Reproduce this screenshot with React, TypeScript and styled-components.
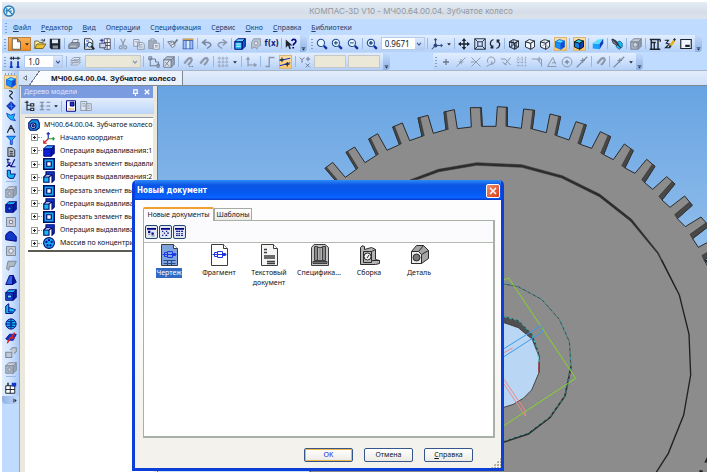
import React from "react";
import styled, { createGlobalStyle, css } from "styled-components";

const Global = createGlobalStyle`
  * { box-sizing: border-box; }
  html, body, #root { height: 100%; }
  body { margin: 0; background: #fff; }
  body, button, input, select {
    font-family: "Noto Sans", "DejaVu Sans Condensed", sans-serif;
    font-size: 7px;
    line-height: 10px;
  }
  button { border: 0; padding: 0; margin: 0; background: none; color: inherit; }
`;

const K = "#1c2430";
const N = "#000080";
const B = "#1038c8";
const C = "#18b8f0";
const G = "#8d98ab";

/* ---------- icons (16 x 16 grid) ---------- */

const cubeWire = (s: string, fill = "none", top = fill, side = fill) => (
  <g stroke={s} strokeWidth="1.2" strokeLinejoin="round">
    <path d="M2 5 9 7v8l-7-3z" fill={fill} />
    <path d="M2 5 7 2l7 2-5 3z" fill={top} />
    <path d="m9 7 5-3v8l-5 3z" fill={side} />
  </g>
);
const boxIcon = (s: string, f: string, t: string, sd: string, inner?: React.ReactNode) => (
  <g stroke={s} strokeWidth="1.3" strokeLinejoin="round">
    <path d="M1 5h10v10H1z" fill={f} />
    <path d="m1 5 4-4h10l-4 4z" fill={t} />
    <path d="m11 5 4-4v10l-4 4z" fill={sd} />
    {inner}
  </g>
);
const lens = (extra?: React.ReactNode) => (
  <g fill="none" stroke="#1c4a90" strokeWidth="1.4">
    <circle cx="6.5" cy="6.5" r="4.8" fill="#e8f6ff" />
    <path d="m10.5 10.5 4 4" stroke="#1230a0" strokeWidth="3" />
    {extra}
  </g>
);
const magnet = (
  <g fill="none" stroke={G} strokeWidth="3">
    <path d="m3 10 5-6q4-3 5 1 0 2-5 7" />
  </g>
);

const icons: Record<string, React.ReactNode> = {
  newdoc: <path d="M3 1h7l4 4v10H3zM10 1v4h4" fill="#fff" stroke="#554" strokeWidth="1.2" />,
  open: (
    <g stroke="#5a4a10" strokeWidth="1">
      <path d="M1 14V4h5l1 2h5v2" fill="#fff2a0" />
      <path d="m1 14 3-6h12l-4 6z" fill="#e8c030" />
      <path d="M9 3q3-2 5 1m0-3v3h-3" fill="none" stroke={K} />
    </g>
  ),
  save: (
    <g>
      <path d="M1 1h14v14H3l-2-2z" fill={K} />
      <path d="M4 2h8v5H4z" fill="#dfe9f5" />
      <path d="M5 10h7v4H5z" fill="#8a93a0" />
    </g>
  ),
  print: (
    <g stroke="#606a7a" strokeWidth="1">
      <path d="m5 7 2-5h7l-2 5z" fill="#e8eef5" />
      <path d="M1 9l3-3h11v5l-3 3H1z" fill="#8c96a6" />
      <path d="M3 11h8" stroke="#e4e8ee" />
    </g>
  ),
  preview: (
    <g fill="none" stroke={K} strokeWidth="1.2">
      <path d="M2 1h8l3 3v11H2z" fill="#fff" />
      <path d="M4 4h4M4 13V7" stroke={B} />
      <circle cx="9" cy="9" r="3.3" fill="#c8f0ff" />
      <path d="m11 11 4 4" strokeWidth="2.4" />
    </g>
  ),
  insert: (
    <g fill="#fff" stroke="#3a3f58" strokeWidth="1.1">
      <path d="M7 1h8v14H7zM7 6h8M11 1v14M7 10h8" />
      <path d="M1 7h8v6H1z" fill="#c8d4f0" />
      <path d="M1 3h5M4 1v5" stroke={N} />
    </g>
  ),
  cut: (
    <g fill="none" stroke={G} strokeWidth="1.5">
      <path d="m5 1 4 9M11 1 7 10" />
      <circle cx="5" cy="12.5" r="2" />
      <circle cx="11" cy="12.5" r="2" />
    </g>
  ),
  copy: <path d="M1 2h7v9H1zM6 6h7l2 2v7H6zM8 9h5M8 12h5M3 5h3" fill="#e4ecf6" stroke={G} strokeWidth="1.3" />,
  paste: (
    <g stroke={G} strokeWidth="1.3">
      <path d="M1 3h10v11H1z" fill="#a5aebd" />
      <path d="M4 1h4v3H4z" fill="#dde4ee" />
      <path d="M7 7h8v8H7zM9 10h4M9 12h4" fill="#eef3fa" />
    </g>
  ),
  brush: (
    <g stroke="#6b7688" strokeWidth="1.2">
      <path d="m1 5 6 8 4-3-3-6z" fill="#dfe7f2" />
      <path d="m9 8 5-6" strokeWidth="2.5" />
      <path d="m3 7 4-1m-2 4 4-2" />
    </g>
  ),
  table: (
    <g>
      <path d="M1 1h14v14H1z" fill="#2a55b8" />
      <path d="M1 1h14v2H1z" fill="#e0a040" />
      <path d="M2 4h3v10H2z" fill="#9cc0f5" />
      <path d="M6 4h4v10H6z" fill="#dceaff" />
      <path d="M11 4h3v10h-3z" fill="#9cc0f5" />
    </g>
  ),
  undo: <path d="M2 6h8q5 2 2 5l-4 3M7 2 2 6l5 4" fill="none" stroke="#7686a4" strokeWidth="2" />,
  redo: <path d="M14 6H6q-5 2-2 5l4 3M9 2l5 4-5 4" fill="none" stroke="#8c99b2" strokeWidth="2" />,
  vars: boxIcon(N, C, "#60e0ff", "#1060c8", <path d="M3 8h6M3 11h6" stroke="#e8ffff" />),
  grayGear: (
    <g stroke={G} strokeWidth="1.2" fill="#b9c1ce">
      <path d="M5 1h9v9l-3 1-2 4-2-3-5 2V6z" />
      <circle cx="8" cy="7" r="2.4" fill="#e4e9f0" />
    </g>
  ),
  help: (
    <g>
      <path d="M1 2v11l3-3 2 5 2-1-2-4h4z" fill={K} />
      <path d="M9 4q1-3 4-2 3 2 0 5-2 1-2 3m0 2v2" fill="none" stroke={N} strokeWidth="2.2" />
    </g>
  ),
  zoom: lens(),
  zoomIn: lens(<path d="M4 6.5h5M6.5 4v5" />),
  zoomOut: lens(<path d="M4 6.5h5" />),
  zoomAll: lens(<path d="M4 6.5h5M6.5 4v5" strokeWidth="2" />),
  axes: (
    <g fill="none" stroke="#3b4f78" strokeWidth="1.4">
      <path d="M6 1v9h9M6 10l-5 5M4 3l2-2 2 2M13 8l2 2-2 2" />
      <circle cx="6" cy="10" r="2" fill={B} />
    </g>
  ),
  move: <path d="M8 0 5 4h2v3H4V5L0 8l4 3V9h3v3H5l3 4 3-4H9V9h3v2l4-3-4-3v2H9V4h2z" fill={K} />,
  fit: <path d="M1 1h14v14H1zM5 5h6v6H5zM1 1l4 4M15 1l-4 4M1 15l4-4M15 15l-4-4" fill="none" stroke={K} strokeWidth="1.2" />,
  rotate: <path d="M6 2Q1 4 2 9l3 4M2 13h3v-3M10 14q5-2 4-7l-3-4m3 0h-3v3" fill="none" stroke={K} strokeWidth="1.7" />,
  cubeA: (
    <g>
      {cubeWire(K)}
      <path d="M2 12l5-3 7 3M7 9V2M5 4v9M11 5v9" stroke={K} strokeWidth=".9" fill="none" />
    </g>
  ),
  cubeB: cubeWire(K, "#f4f8ff"),
  cubeC: (
    <g>
      {cubeWire(K, "#f4f8ff")}
      <path d="m2 12 5-3 7 3M7 9V2" stroke={G} fill="none" />
    </g>
  ),
  cubeSolid: cubeWire("#1a6ae8", "#1590f8", "#4cdcff", "#1048d0"),
  cubeEdge: cubeWire("#06141e", "#1080e8", "#38d8e8", "#0c3cb0"),
  persp: (
    <g>
      <path d="m1 7 9 1v7l-9-1z" fill="#18a0ff" />
      <path d="m1 7 7-5 7-1-5 7z" fill="#5ce0ff" />
      <path d="m10 8 5-7v6l-5 8z" fill="#1038c0" />
    </g>
  ),
  split: (
    <g strokeWidth="1">
      <path d="m7 6 5-2 3 3v5l-4 3-4-3z" fill={C} stroke="#1060a0" />
      <path d="m1 2 5 1 4 5-2 2-5-3z" fill="#7a8894" stroke={K} />
      <path d="m2 1 11 12" stroke={K} strokeWidth="1.4" />
    </g>
  ),
  grayBlock: boxIcon("#7c8798", "#aab3c0", "#c5ccd6", "#8f99a8", <circle cx="7" cy="9" r="3" fill="#d0d6df" />),
  dims: <path d="M1 2h14M2 6h7M3 2v12M7 6v9M1 15h9M12 2v13M15 2v3M10 15h5" fill="none" stroke={K} strokeWidth="1.8" />,
  pen: (
    <g fill="none" strokeWidth="1.5">
      <path d="M1 3h5L3 7l4 1-5 5h6" stroke={K} />
      <path d="m8 11 6-8" stroke="#e8b010" strokeWidth="3.4" />
      <path d="m13 3 2-2M7 13l2-3" stroke={K} strokeWidth="2.4" />
    </g>
  ),
  screen: (
    <g>
      <path d="M1 2h14v12H1z" fill="#eef4fc" stroke={K} strokeWidth="1.5" />
      <path d="M7 9h6v3H7z" fill={K} />
    </g>
  ),
  step: (
    <g fill="none" stroke={B} strokeWidth="1.5">
      <path d="M3 7v8M12 7v8M1 15h4M10 15h4" strokeWidth="2.4" />
      <path d="M1 3h14M3 1v4M12 1v4M6 1v4" stroke={K} />
    </g>
  ),
  layers: <path d="m1 12 4-4h9l-4 4zM1 9l4-4h9l-4 4zM1 6l4-4h9l-4 4z" fill="#dce4ef" stroke={G} strokeWidth="1.1" />,
  sketch: <path d="M3 2v12M1 4h9v4h4v5H3M1 1h4v4H1zM12 11h3v4h-3z" fill="none" stroke="#717d92" strokeWidth="1.3" />,
  sketch2: boxIcon("#717d92", "#dfe6ef", "#b5bfcd", "#98a3b4", <path d="M3 13 9 5M3 8l5 5" />),
  magnetDots: (
    <g>
      {magnet}
      <path d="M10 14h1m2 0h1" stroke={K} strokeWidth="1.6" />
    </g>
  ),
  magnet,
  grid: <path d="M3 1v14M8 1v14M13 1v14M1 3h14M1 8h14M1 13h14" stroke={G} strokeWidth="1.2" strokeDasharray="2 1" />,
  ortho: <path d="M4 14V2M2 5l2-3 2 3M4 12h11M12 10l3 2-3 2" fill="none" stroke={G} strokeWidth="1.6" />,
  stairs: <path d="M2 14h5V2h7" fill="none" stroke={G} strokeWidth="1.8" />,
  snapOn: (
    <g fill="none" stroke={K} strokeWidth="1.4">
      <path d="M1 6 15 3M1 13l14-4" stroke={B} />
      <path d="M4 2v6M1 5h6M11 8v6M8 11h6" />
    </g>
  ),
  xy: <path d="m1 2 3 3 3-3M4 5v4M9 4h6M12 1v6M9 10l5 5M14 10l-5 5" fill="none" stroke="#69768e" strokeWidth="1.3" />,
  plus: <path d="M8 4v8M4 8h8" stroke="#6a768a" strokeWidth="1.7" />,
  s1: <path d="M2 14 14 2M8 4v7M5 8h6" stroke={G} strokeWidth="1.3" />,
  s2: <path d="M2 2l12 12M14 2 2 14M1 8h5" stroke={G} strokeWidth="1.3" />,
  s3: <path d="M4 9a5 5 0 1 1 6 2M2 14 11 9M9 7v5" fill="none" stroke={G} strokeWidth="1.3" />,
  s4: <path d="M1 4h6l7 8M14 2 6 12M3 8l6 4" fill="none" stroke={G} strokeWidth="1.3" />,
  s5: <path d="M3 1v14M8 1v14M13 1v14M1 4h14M1 8h14M1 13h14" stroke={G} strokeWidth="1.4" strokeDasharray="1.5 2" />,
  s6: <path d="M1 4h13v10M8 4l6 7M11 1v6" fill="none" stroke={G} strokeWidth="1.3" />,
  s7: <path d="M2 14h12M2 14 9 2l4 9M8 9h5" fill="none" stroke={G} strokeWidth="1.3" />,
  s8: (
    <g fill="none" stroke={G} strokeWidth="1.3">
      <circle cx="8" cy="8" r="6.5" />
      <path d="M8 5v6M5 8h6" stroke="#626f84" />
    </g>
  ),
  s9: <path d="M1 15 15 1M6 6h6M9 3v6" stroke="#7c889c" strokeWidth="1.5" />,
  squiggle: <path d="M5 1q8 2 4 5t-3 4 5 5" fill="none" stroke={K} strokeWidth="1.8" />,
  diamond: (
    <g stroke={N}>
      <path d="m8 1 7 7-7 7-7-7z" fill={B} />
      <path d="m4 8 8 1M8 3l1 10" stroke="#48a8ff" />
    </g>
  ),
  surface: <path d="m1 2 6 3 7-2-2 6 3 5-8-2-4-4z" fill={C} stroke={B} strokeWidth="1.3" />,
  compass: <path d="m8 2-6 12M8 2l6 12M4 9q4-4 9 0" fill="none" stroke={K} strokeWidth="1.8" />,
  filter: <path d="M1 2h14l-5 6v7H7V8z" fill={C} stroke={B} strokeWidth="1.4" />,
  page: <path d="M3 1h7l4 4v10H3zM6 7h5M6 10h5M6 13h5" fill="#b6bdc9" stroke={K} strokeWidth="1.4" />,
  measure: <path d="M1 2h5M3 2v6h5M1 14l4-4 3 4 6-12M9 14h6" fill="none" stroke={N} strokeWidth="1.7" />,
  bend: <path d="M2 2h5v6h8l-3 7H6q-4-1-4-5z" fill={C} stroke={N} strokeWidth="1.4" />,
  gBox: boxIcon("#808b9c", "#b4bdc9", "#cbd2dc", "#9aa4b2", <path d="M4 8h4v4H4z" fill="#dde2ea" />),
  gFlat: <path d="M2 13 4 3h11l-3 7H6l-1 5z" fill="#b0b9c6" stroke="#7d8899" strokeWidth="1.3" />,
  gHole: (
    <g stroke="#7d8899" strokeWidth="1.3">
      <path d="M2 2h12v12H2z" fill="#c3cad5" />
      <circle cx="8" cy="8" r="3" fill="#eceff4" />
    </g>
  ),
  gSquare: (
    <g stroke="#7d8899" strokeWidth="1.3">
      <path d="M2 2h12v12H2z" fill="#c3cad5" />
      <path d="M6 6h4v4H6z" fill="#eceff4" />
    </g>
  ),
  bBox: boxIcon(N, B, C, "#0820a0", <path d="M4 8h4v4H4z" fill={C} />),
  dome: <path d="M1 13V7q4-7 9-4l5 6v6z" fill={B} stroke={N} strokeWidth="1.3" />,
  wedge: (
    <g stroke={N} strokeWidth="1.2">
      <path d="m1 14 5-12h5l-1 12z" fill="#3060e0" />
      <path d="m11 2 4 9-5 3z" fill="#0820a0" />
    </g>
  ),
  shell: boxIcon(N, "#2060e0", C, "#0820a0", <path d="M3 8h6v4H3z" fill="#70e0ff" />),
  arrowShape: (
    <g stroke={N} strokeWidth="1.2">
      <path d="M1 4 5 1v5l9 3-4 5H1z" fill={C} />
      <path d="M5 6v6h6" fill="none" />
    </g>
  ),
  sphere: (
    <g stroke={N} strokeWidth="1.2" fill="none">
      <circle cx="8" cy="8" r="6.8" fill={C} />
      <path d="M8 1v14M1 8h14M3 4q5 3 10 0M3 12q5-3 10 0" />
    </g>
  ),
  redBlue: (
    <g>
      <path d="M1 9 6 3h9l-4 8H4z" fill={B} stroke={N} />
      <path d="m3 15 4-7h6M13 1 8 8" stroke="#e02020" strokeWidth="2" fill="none" />
    </g>
  ),
  gCopy: <path d="M1 7h8v7H1zM7 4l3-3h5v5l-3 3" fill="#c3cad5" stroke="#7d8899" strokeWidth="1.4" />,
  report: (
    <g>
      <path d="M1 5h12v10H1zM1 10h12M7 5v10" fill="#fff" stroke={K} strokeWidth="1.3" />
      <path d="M9 1h6v5H9z" fill={B} />
      <path d="M4 1v4" stroke={K} strokeWidth="2" />
    </g>
  ),
  tree: <path d="M4 1v13M1 3h5M4 7h5M4 13h5M9 5h4v3H9zM9 11h4v3H9z" fill="#fff" stroke={K} strokeWidth="1.5" />,
  list: <path d="M1 3h6M1 8h6M1 13h6M10 3h5M10 8h5M10 13h5M4 3v10" stroke="#76849c" strokeWidth="1.5" />,
  bluePage: (
    <g stroke={N} strokeWidth="1.3">
      <path d="M2 1h12v14H2z" fill="#fff" />
      <path d="M7 3h5v5H7z" fill={B} />
      <path d="M4 12h8" stroke="#d8a030" />
    </g>
  ),
  grayPages: <path d="M1 2h8v12H1zM8 5h7v9H8zM3 5h4M3 8h4M10 8h3M10 11h3" fill="#dfe6f0" stroke={G} strokeWidth="1.3" />,
  origin: (
    <g fill="none" strokeWidth="1.6">
      <path d="M7 9V1M5 3l2-2 2 2" stroke="#2030b0" />
      <path d="M7 9h8M13 7l2 2-2 2" stroke="#20963c" />
      <path d="m7 9-6 6M1 11v4h4" stroke="#d02020" />
    </g>
  ),
  extrude: boxIcon(N, "#0c20d8", "#30b0ff", "#0818a0"),
  cutBox: (
    <g>
      <path d="M1 1h14v14H1z" fill="#18a8e8" stroke="#000a70" strokeWidth="2" />
      <path d="M5 5h6v6H5z" fill="#fff" stroke="#000a70" strokeWidth="1.6" />
    </g>
  ),
  addBox: (
    <g stroke="#000a70" strokeWidth="1.5">
      <path d="M4 1h11v11l-3 3V5H4z" fill={B} />
      <path d="M1 8h7v7H1z" fill={C} />
      <path d="m4 5-3 3M8 8l4-3" />
    </g>
  ),
  pattern: (
    <g>
      <circle cx="8" cy="8" r="7.2" fill="#16a8f0" stroke="#000a70" strokeWidth="1.5" />
      <g fill="#000a90">
        <circle cx="8" cy="4" r="1.5" />
        <circle cx="4.5" cy="6.5" r="1.5" />
        <circle cx="11.5" cy="6.5" r="1.5" />
        <circle cx="6" cy="11" r="1.5" />
        <circle cx="10" cy="11" r="1.5" />
      </g>
    </g>
  ),
  part: (
    <g stroke="#000a70" strokeWidth="1.4">
      <path d="m1 5 4-4h8l2 4v7l-4 3H3l-2-3z" fill="#1490e0" />
      <circle cx="7" cy="9" r="3.6" fill="#fff" />
      <circle cx="7" cy="9" r="1.5" fill={C} />
    </g>
  ),
  logo: (
    <g fill="none" stroke="#2b7fb8">
      <circle cx="8" cy="8" r="6.8" strokeWidth="2" fill="#e8f6ff" />
      <path d="M5 4v8M5 8l6-4M7 7l5 5M3 8h9" strokeWidth="1.6" />
    </g>
  ),
  viewLarge: (
    <g fill={N}>
      <path d="M0 0h16v3H0zM2 5h4v4H2zM8 8h4v4H8z" />
      <path d="M2 11h4M8 14h5" stroke={K} />
    </g>
  ),
  viewSmall: <path d="M0 0h16v3H0zM2 5h2v2H2zM9 5h2v2H9zM5 8h2v2H5zM11 8h3v2h-3zM2 12h2v2H2zM8 12h3v2H8z" fill={N} />,
  viewTable: <path d="M0 0h16v3H0zM2 5h3v2H2zM6 5h3v2H6zM11 5h3v2h-3zM2 9h3v1H2zM6 9h3v1H6zM11 9h3v1h-3zM2 12h3v2H2zM6 12h3v2H6zM11 12h3v2h-3z" fill={N} />,
  caret: <path d="M3 6h10l-5 6z" fill={K} />,
  prev: <path d="M12 2v12L4 8z" fill="#fff" stroke={K} strokeWidth="1.6" />,
  chevron: <path d="m3 5 5 6 5-6" fill="none" stroke="#3b5a92" strokeWidth="3" />,
  overflow: <path d="M2 3h12v2H2zM3 8h10l-5 6z" fill={K} />,
  overflowSide: <path d="M3 2h2v12H3zM8 2l7 6-7 6z" fill={K} />,
};

const Svg = styled.svg<{ $s: number }>`
  display: block;
  flex: none;
  width: ${(p) => p.$s}px;
  height: ${(p) => p.$s}px;
`;
const Icon = ({ n, s = 12 }: { n: string; s?: number }) => (
  <Svg viewBox="0 0 16 16" $s={s} aria-hidden="true">
    {icons[n]}
  </Svg>
);

/* ---------- window frame ---------- */

const Window = styled.div`
  display: flex;
  flex-direction: column;
  min-height: calc(100vh - 3px);
  margin: 0 2px 3px;
  padding-top: 2px;
  background: #bfdbff;
  background-clip: content-box;
  position: relative;
  overflow: hidden;
`;
const TitleBar = styled.header`
  display: flex;
  align-items: center;
  height: 17px;
  padding-left: 1px;
  background: linear-gradient(#e4edf6, #d5dde8 60%, #dde3ea);
`;
const Title = styled.h1`
  flex: 1;
  margin: 0;
  padding-left: 100px;
  text-align: center;
  font: 8px "Inter", sans-serif;
  color: #92979f;
`;
const MenuBar = styled.nav`
  display: flex;
  align-items: center;
  height: 16px;
  padding: 1px 0 0 3px;
  color: #24406e;
`;
const MenuItems = styled.div`
  display: flex;
  gap: 10px;
  padding-left: 6px;
`;
const Grip = styled.span<{ $side?: boolean }>`
  flex: none;
  ${(p) =>
    p.$side
      ? css`
          width: 11px;
          height: 2px;
          background: repeating-linear-gradient(90deg, #7f9fd0 0 1px, transparent 1px 3px);
        `
      : css`
          width: 2px;
          height: 10px;
          background: repeating-linear-gradient(#7f9fd0 0 1px, transparent 1px 3px);
        `}
`;
const ToolRows = styled.div`
  display: grid;
  gap: 1px;
`;
const ToolRow = styled.div<{ $gap: number }>`
  display: flex;
  gap: ${(p) => p.$gap}px;
  height: 17px;
`;
const Toolbar = styled.div<{ $w: number }>`
  display: flex;
  align-items: center;
  justify-content: space-between;
  width: ${(p) => p.$w}px;
  padding-left: 2px;
  border-radius: 2px 4px 4px 2px;
  background: linear-gradient(#e2eeff, #cfe2fd 45%, #b3d0f8);
`;
const Tool = styled.button<{ $on?: boolean }>`
  display: flex;
  align-items: center;
  justify-content: center;
  flex: none;
  min-width: 13px;
  height: 14px;
  ${(p) =>
    p.$on &&
    css`
      background: linear-gradient(#fde0a8, #fbc468);
      box-shadow: inset 0 0 0 1px #d8b878;
    `}
`;
const NewButton = styled(Tool)`
  gap: 2px;
  width: 23px;
  background: linear-gradient(#f9b25c, #f58a18);
  box-shadow: inset 0 0 0 1px #b88548;
`;
const Divider = styled.span<{ $side?: boolean }>`
  flex: none;
  width: ${(p) => (p.$side ? "10px" : "1px")};
  height: ${(p) => (p.$side ? "1px" : "11px")};
  margin: ${(p) => (p.$side ? "1px 0 3px" : "0")};
  background: #98b8e4;
`;
const Cap = styled.button`
  display: flex;
  align-items: flex-end;
  justify-content: center;
  align-self: stretch;
  flex: none;
  width: 7px;
  padding-bottom: 1px;
  border-radius: 0 4px 4px 0;
  background: linear-gradient(#c4dafa, #8fb2e4);
`;
const Formula = styled.span`
  font: bold 8px "DejaVu Sans Condensed", sans-serif;
  color: #101a70;
`;
const Combo = styled.span<{ $w: number; $off?: boolean }>`
  display: flex;
  align-items: center;
  flex: none;
  width: ${(p) => p.$w}px;
  height: 13px;
  border: 1px solid ${(p) => (p.$off ? "#c5c8c4" : "#b4cbea")};
  background: ${(p) => (p.$off ? "#ebe8d8" : "#fff")};
`;
const Select = styled.select`
  appearance: none;
  flex: 1;
  min-width: 0;
  height: 11px;
  border: 0;
  padding: 0 0 0 3px;
  background: none;
  font-size: 8px;
  color: #101828;
`;
const Drop = styled.span<{ $off?: boolean }>`
  display: flex;
  align-items: center;
  justify-content: center;
  width: 9px;
  height: 11px;
  background: ${(p) => (p.$off ? "#e2e0d2" : "linear-gradient(#dde9fd, #b5cdf4)")};
  opacity: ${(p) => (p.$off ? 0.6 : 1)};
`;
const Field = styled.input`
  width: 32px;
  height: 13px;
  border: 1px solid #c5c8c4;
  background: #ebe8d8;
`;

const Tools = ({ items }: { items: string[] }) => (
  <>
    {items.map((n, i) => {
      if (n === "|") return <Divider key={i} />;
      if (n === "caret") return <Icon key={i} n="caret" s={6} />;
      if (n === "fx")
        return (
          <Tool key={i} aria-label="f(x)">
            <Formula>f(x)</Formula>
          </Tool>
        );
      const on = n[0] === "*";
      const name = on ? n.slice(1) : n;
      return (
        <Tool key={i} $on={on} aria-label={name}>
          <Icon n={name} />
        </Tool>
      );
    })}
  </>
);
const Overflow = () => (
  <Cap aria-label="Параметры панели">
    <Icon n="overflow" s={5} />
  </Cap>
);

/* ---------- work area ---------- */

const Work = styled.div`
  display: flex;
  flex: 1;
  border-top: 1px solid #a8b6c8;
`;
const SideRail = styled.aside`
  display: flex;
  flex: none;
  width: 17px;
`;
const SideBar = styled.div`
  display: flex;
  flex-direction: column;
  align-items: center;
  align-self: flex-start;
  width: 17px;
  border-radius: 0 0 4px 4px;
  padding-top: 2px;
  background: linear-gradient(90deg, #e2eeff, #cfe2fd 50%, #a9c9f5);
`;
const SideGroup = styled.div<{ $h: number }>`
  display: grid;
  grid-auto-rows: 1fr;
  justify-items: center;
  height: ${(p) => p.$h}px;
`;
const RailTool = styled(Tool)`
  height: auto;
  min-height: 0;
`;
const SideCap = styled.button`
  display: flex;
  align-items: center;
  justify-content: flex-end;
  width: 17px;
  height: 8px;
  padding-right: 2px;
  border-radius: 0 0 4px 4px;
  background: linear-gradient(90deg, #8fb2e4, #c4dafa);
`;
const Main = styled.main`
  display: flex;
  flex-direction: column;
  flex: 1;
  min-width: 0;
`;
const TabRow = styled.div`
  display: flex;
  height: 15px;
  padding-left: 2px;
  border-bottom: 1px solid #7d8790;
  background: linear-gradient(#e2ecfb, #cfe0f8);
`;
const DocTab = styled.button`
  height: 14px;
  width: 154px;
  padding-left: 22px;
  border-right: 1px solid #7d8790;
  text-align: left;
  white-space: nowrap;
  font: bold 8px "Liberation Sans", Arial, sans-serif;
  color: #10141c;
  background: linear-gradient(
    125deg,
    transparent 8px,
    #6f7f98 8px,
    #6f7f98 9px,
    #fbfdff 9px,
    #e9f1fc
  );
`;
const Prev = styled.button`
  width: 8px;
  padding: 0 1px;
`;
const Split = styled.div`
  display: flex;
  flex: 1;
`;
const Panel = styled.section`
  display: flex;
  flex-direction: column;
  flex: none;
  width: 139px;
  padding: 0 4px 0 5px;
  background: #ece9dc;
  border-left: 1px solid #a6a89c;
  border-right: 1px solid #4c7db4;
`;
const PanelHead = styled.header`
  display: flex;
  align-items: center;
  gap: 5px;
  height: 12px;
  margin-left: -4px;
  padding: 0 3px;
  background: #7b9be0;
  color: #dde8ff;
`;
const PanelTitle = styled.h2`
  flex: 1;
  margin: 0;
  font-size: 7px;
  font-weight: normal;
`;
const PanelTools = styled.div`
  display: flex;
  align-items: center;
  gap: 2px;
  height: 16px;
  margin: 0 -1px 3px -4px;
  padding-left: 2px;
  background: linear-gradient(#e2edfd, #bdd5f8);
`;
const TreeBox = styled.div`
  flex: 1;
  overflow: hidden;
  background: #fff;
  border-top: 1px solid #8d96a2;
`;
const TreeList = styled.ul`
  display: grid;
  grid-template-rows: repeat(10, 1fr);
  height: 134px;
  margin: 0 0 0 3px;
  padding: 0;
  list-style: none;
  border-bottom: 2px solid #5c5c55;
`;
const Node = styled.li<{ $root?: boolean }>`
  display: flex;
  align-items: center;
  gap: ${(p) => (p.$root ? 4 : 5)}px;
  padding-left: ${(p) => (p.$root ? 0 : 3)}px;
  white-space: nowrap;
  color: #10141c;
`;
const Branch = styled.span`
  display: flex;
  align-items: center;
  &::after {
    content: "";
    width: 4px;
    border-top: 1px dotted #a0a0a0;
  }
`;
const Expander = styled.button`
  display: flex;
  width: 7px;
  height: 7px;
  border: 1px solid #9a9a94;
`;
const NodeRow = styled.span`
  display: flex;
  align-items: center;
  gap: 1px;
`;
const Viewport = styled.svg`
  display: block;
  flex: 1;
  min-width: 0;
  height: 100%;
`;

/* ---------- gear model ---------- */

// Each tooth: left root, left tip, right tip, right root.
const teeth: number[][] = [
  [75, 270, 45, 235, 68, 217, 106, 262],
  [139, 238, 108, 187, 134, 171, 165, 218],
  [199, 196, 176, 147, 203, 131, 231, 181],
  [268, 164, 248, 111, 277, 99, 299, 152],
  [336, 139, 324, 84, 354, 76, 370, 130],
  [408, 119, 402, 66, 433, 59, 442, 116],
  [484, 111, 481, 53, 514, 53, 517, 109],
  [558, 109, 562, 50, 592, 52, 592, 109],
  [634, 115, 641, 57, 674, 61, 667, 117],
  [709, 128, 720, 72, 752, 80, 740, 137],
  [777, 150, 798, 95, 829, 105, 811, 163],
  [845, 175, 871, 125, 902, 140, 881, 194],
  [910, 209, 943, 162, 970, 182, 945, 234],
  [975, 250, 1010, 208, 1035, 229, 1004, 278],
  [1028, 298, 1070, 260, 1095, 282, 1056, 330],
  [1080, 352, 1124, 318, 1147, 346, 1102, 386],
  [1126, 410, 1173, 381, 1197, 408, 1148, 446],
  [1165, 472, 1210, 448, 1230, 480, 1182, 510],
];
const gearPath = `M${teeth.map((t) => t.join(" ")).join(" L")} L1200 540 1200 1170 0 1170 0 350z`;
const toothSide = (t: number[], i: number) => {
  const left = i < 6;
  const f = left ? 0.2 : Math.min(0.1 + (i - 6) * 0.03, 0.36);
  const [rlx, rly, tlx, tly, trx, tr, rrx, rry] = t;
  const mix = (a: number, b: number) => a + (b - a) * f;
  return left
    ? `${tlx},${tly} ${rlx},${rly} ${mix(rlx, rrx)},${mix(rly, rry)} ${mix(tlx, trx)},${mix(tly, tr)}`
    : `${trx},${tr} ${rrx},${rry} ${mix(rrx, rlx)},${mix(rry, rly)} ${mix(trx, tlx)},${mix(tr, tly)}`;
};

const Model = () => (
  <Viewport viewBox="158 86 549 386" preserveAspectRatio="xMinYMin slice" role="img" aria-label="Зубчатое колесо">
    <defs>
      <linearGradient id="sky" x1="0" y1="0" x2="0" y2="1">
        <stop offset="0" stopColor="#68a4e2" />
        <stop offset="1" stopColor="#c8e0f8" />
      </linearGradient>
    </defs>
    <rect x="158" y="86" width="549" height="386" fill="url(#sky)" />
    <g transform="translate(310 90) scale(.33333)">
      <path d={gearPath} fill="#8c8c8c" stroke="#2a2a2a" strokeWidth="3" />
      {teeth.map((t, i) => (
        <polygon key={i} points={toothSide(t, i)} fill="#484848" stroke="#262626" strokeWidth="1.5" />
      ))}
      <path
        d="M300 270 385 238 500 218 635 224 757 257 870 313 965 388 1045 488 1100 600 1043 491 962 394 868 320 755 264 635 232 500 226 387 245 325 268z"
        fill="#2d2d2d"
        stroke="#2d2d2d"
        strokeWidth="1.5"
      />
    </g>
    <g transform="translate(490 260) scale(.33333)" fill="none" strokeWidth="3">
      <path d="M515 0 568 105 597 222 602 345 581 465 535 580 498 638" stroke="#202020" strokeWidth="4" />
      <path d="M0 165 42 170 85 182 125 222 140 262 148 290 127 238 85 203 42 188 0 185z" fill="#505050" stroke="#333" />
      <path d="M0 188H42L85 203 127 238 140 272 148 290 147 338 125 390 100 415 70 433 42 442H0z" fill="#b9d7f4" stroke="#454545" />
      <path d="M42 170 85 182 125 222 140 262 148 310" stroke="#39c4c9" strokeDasharray="9 6" />
      <path d="M147 305v33" stroke="#9c1515" />
      <path d="M42 72 85 80 155 118 208 178 238 245 243 320 225 408 180 472 115 520 42 545" stroke="#3c4646" />
      <path d="M243 320 225 408 180 472 115 522 42 546" stroke="#303030" strokeWidth="5" />
      <path d="M42 71 85 79 155 117 208 177 238 245 243 320 225 408 180 470 115 518 42 543" stroke="#42c0c4" strokeWidth="2" strokeDasharray="9 8" />
      <path d="m42 60 14-6 201 301L42 497" stroke="#86d62c" />
      <path d="m42 266 110-69 6 18L42 290" stroke="#3a9ae8" />
      <path d="m42 278 26-14M42 358l64 94v16L42 372" stroke="#ee8884" />
      <path d="m654 8-8-8M654 592l-8 16M628 634h10" stroke="#222" strokeWidth="6" />
    </g>
  </Viewport>
);

/* ---------- dialog ---------- */

const Dialog = styled.section`
  position: absolute;
  left: 130px;
  top: 180px;
  width: 372px;
  border: 3px solid #0b3fd8;
  border-top: 0;
  border-radius: 5px 5px 0 0;
  background: #f4f3ee;
  overflow: hidden;
`;
const DialogHead = styled.header`
  display: flex;
  align-items: center;
  justify-content: space-between;
  height: 20px;
  margin: 0 -3px;
  padding: 1px 4px 0 5px;
  background: linear-gradient(#2d8bf8, #0b56e4 25%, #0558ee 60%, #0a62ff 88%, #0238c8);
`;
const DialogTitle = styled.h2`
  margin: 0;
  font: bold 8px "DejaVu Sans Condensed", sans-serif;
  color: #fff;
`;
const Close = styled.button`
  width: 14px;
  height: 14px;
  padding: 2px;
  border: 1px solid #fff;
  border-radius: 2px;
  background: linear-gradient(135deg, #f09070, #d83c18);
`;
const DialogBody = styled.div`
  padding: 7px 6px 6px 8px;
  background: linear-gradient(#fdfdfe, #fafafa 50%, #f3f2ec 85%);
`;
const Tabs = styled.div`
  display: flex;
  align-items: flex-end;
`;
const Tab = styled.button<{ $on?: boolean }>`
  height: ${(p) => (p.$on ? 14 : 12)}px;
  width: ${(p) => (p.$on ? 71 : 38)}px;
  white-space: nowrap;
  border: 1px solid #a3a9a4;
  border-bottom: 0;
  ${(p) => p.$on && "border-top: 2px solid #f0a030; border-radius: 2px 2px 0 0; margin-bottom: -1px;"}
  background: ${(p) => (p.$on ? "#fcfcfe" : "linear-gradient(#fff, #ecebe4)")};
  color: #10141c;
  position: relative;
`;
const Pane = styled.div`
  border: 1px solid #a9b0a8;
  border-right-width: 2px;
  border-bottom-width: 2px;
  background: #fff;
`;
const ViewTools = styled.div`
  display: flex;
  gap: 1px;
  height: 22px;
  padding: 4px 1px 0;
  border-bottom: 1px solid #b6bbb0;
  background: #fbfbfd;
`;
const ViewButton = styled.button`
  display: flex;
  align-items: center;
  justify-content: center;
  width: 13px;
  height: 14px;
  border: 1px solid #22486e;
  border-radius: 2px;
  background: #dfe8f2;
`;
const Docs = styled.div`
  display: grid;
  grid-template-columns: repeat(auto-fill, 50px);
  align-content: start;
  height: 193px;
  padding-top: 1px;
`;
const Doc = styled.button`
  display: flex;
  flex-direction: column;
  align-items: center;
  gap: 1px;
  color: #10141c;
`;
const DocLabel = styled.span<{ $on?: boolean }>`
  padding: 0 1px;
  line-height: 10px;
  ${(p) => p.$on && "background: #316ac5; color: #fff;"}
`;
const Actions = styled.footer`
  display: flex;
  justify-content: flex-end;
  gap: 11px;
  padding: 10px 22px 0 0;
`;
const Action = styled.button<{ $primary?: boolean }>`
  width: 49px;
  height: 14px;
  border: 1px solid #34568a;
  border-radius: 2px;
  background: linear-gradient(#fff, #ecebe5);
  color: ${(p) => (p.$primary ? "#2020e0" : "#10141c")};
  ${(p) => p.$primary && "box-shadow: inset 0 0 0 1px #f0b848;"}
`;
const SizeGrip = styled.span`
  position: absolute;
  right: 0;
  bottom: 0;
  width: 10px;
  height: 10px;
  background: radial-gradient(circle at 1px 1px, #b0ac98 1px, transparent 1px) 0 0 / 3px 3px;
  clip-path: polygon(100% 0, 100% 100%, 0 100%);
`;

const sheet = (fill: string, body: React.ReactNode) => (
  <g stroke="#3c3c40" strokeWidth="1">
    <path d="M3.5 .5h12l4 4v17h-16z" fill={fill} />
    <path d="M15.5 .5v4h4" fill="#fff" />
    {body}
  </g>
);
const bolt = (
  <path d="M6.5 8.5h3v4h-3zM9.5 7.5h5v6h-5zM14.5 9.5h3v2h-3zM4.5 10.5h14" fill="none" stroke="#2038e0" strokeWidth="1" />
);
const docIcons: React.ReactNode[] = [
  sheet(
    "#7fa6dc",
    <>
      {bolt}
      <path d="M5.5 16.5h12M5.5 19.5h12M9.5 16v5M13.5 16v5" stroke="#27488c" fill="none" />
    </>
  ),
  sheet("#fff", bolt),
  sheet("#f4f4f2", <path d="M6 5.5h3M6 8.5h3M6 12h11M6 14h11M9 17.5h8M9 19.5h8" strokeWidth="1.4" />),
  <g stroke="#3c3c40" key="spec">
    <path d="M3.5 3.5 6 .5h11l3.5 3v18h-17z" fill="#c4c4c2" />
    <path d="M6.5 2.5h3v14h-3zM14.5 2.5h3v14h-3z" fill="#8e8e8e" />
    <path d="M9.5 3.5h5v13h-5z" fill="#b4b4b2" />
    <path d="M12 3.5v13" stroke="#777" />
    <path d="M5 17.5h14v2H5z" fill="#777" />
  </g>,
  <g stroke="#2c2c30" key="asm">
    <path d="M2.5 3.5q1-3 4-1v3l7-2 4 2v10l4 1v3l-4 1h-15z" fill="#b4b4b2" />
    <path d="M5.5 7.5h8l4-2M13.5 7.5v9h8M5.5 7.5v11h8v-2" fill="none" />
    <circle cx="9.5" cy="12.5" r="3.5" fill="#f4f4f2" />
    <path d="m9 14 2-3" />
  </g>,
  <g stroke="#2c2c30" key="part">
    <path d="m3.5 7.5 5-6h7l5 5v8l-7 5h-10z" fill="#a4a4a2" />
    <path d="M3.5 7.5h7l3 3v9h-10z" fill="#ececea" />
    <path d="m10.5 7.5 5-6M13.5 10.5l7-4" fill="none" />
    <circle cx="8.5" cy="13.5" r="3.5" fill="#777" />
  </g>,
];
const docNames = ["Чертеж", "Фрагмент", "Текстовый документ", "Специфика...", "Сборка", "Деталь"];

const menu: [string, string, string][] = [
  ["", "Ф", "айл"],
  ["", "Р", "едактор"],
  ["", "В", "ид"],
  ["Опера", "ц", "ии"],
  ["С", "п", "ецификация"],
  ["С", "е", "рвис"],
  ["", "О", "кно"],
  ["", "С", "правка"],
  ["", "Б", "иблиотеки"],
];
const nodes: [string, string][] = [
  ["origin", "Начало координат"],
  ["extrude", "Операция выдавливания:1"],
  ["cutBox", "Вырезать элемент выдавливания:1"],
  ["addBox", "Операция выдавливания:2"],
  ["cutBox", "Вырезать элемент выдавливания:2"],
  ["addBox", "Операция выдавливания:3"],
  ["cutBox", "Вырезать элемент выдавливания:3"],
  ["addBox", "Операция выдавливания:4"],
  ["pattern", "Массив по концентрической сетке"],
];
const railTop = ["squiggle", "diamond", "surface", "compass", "filter", "page", "measure", "bend"];
const railMain = "gBox bBox gSquare dome gHole gFlat wedge shell arrowShape sphere redBlue gCopy gBox".split(" ");

export default function App() {
  return (
    <>
      <Global />
      <Window>
        <TitleBar>
          <Icon n="logo" />
          <Title>КОМПАС-3D V10 - МЧ00.64.00.04. Зубчатое колесо</Title>
        </TitleBar>
        <MenuBar>
          <Grip />
          <MenuItems>
            {menu.map(([a, u, b]) => (
              <button key={a + u + b}>
                {a}
                <u>{u}</u>
                {b}
              </button>
            ))}
          </MenuItems>
        </MenuBar>
        <ToolRows>
          <ToolRow $gap={2}>
            <Toolbar $w={305}>
              <Grip />
              <NewButton aria-label="Создать">
                <Icon n="newdoc" />
                <Icon n="caret" s={6} />
              </NewButton>
              <Tools
                items={"open save | print preview insert | cut copy paste | brush table | undo redo | vars grayGear fx | help".split(" ")}
              />
              <Overflow />
            </Toolbar>
            <Toolbar $w={393}>
              <Grip />
              <Tools items={"zoom zoomIn zoomOut | zoomAll".split(" ")} />
              <Combo $w={44}>
                <Select aria-label="Масштаб">
                  <option>0.9671</option>
                </Select>
                <Drop>
                  <Icon n="chevron" s={6} />
                </Drop>
              </Combo>
              <Tools
                items={"| axes caret | move fit rotate | cubeA cubeB cubeC *cubeSolid | *cubeEdge | persp | split | grayBlock | dims pen screen".split(" ")}
              />
              <Overflow />
            </Toolbar>
          </ToolRow>
          <ToolRow $gap={43}>
            <Toolbar $w={388}>
              <Grip />
              <Tools items={["step"]} />
              <Combo $w={39}>
                <Select aria-label="Шаг курсора">
                  <option>1.0</option>
                </Select>
                <Drop>
                  <Icon n="chevron" s={6} />
                </Drop>
              </Combo>
              <Tools items={["|", "layers"]} />
              <Combo $w={56} $off>
                <Select aria-label="Слой" disabled />
                <Drop $off>
                  <Icon n="chevron" s={6} />
                </Drop>
              </Combo>
              <Tools items={"| sketch sketch2 | magnetDots magnet | grid caret | ortho | stairs *snapOn | xy".split(" ")} />
              <Field aria-label="Координата X" disabled />
              <Field aria-label="Координата Y" disabled />
              <Overflow />
            </Toolbar>
            <Toolbar $w={210}>
              <Grip />
              <Tools items={"plus s1 s2 s3 s4 s5 s6 s7 s8 s9 | magnet | s9 caret".split(" ")} />
              <Overflow />
            </Toolbar>
          </ToolRow>
        </ToolRows>
        <Work>
          <SideRail>
            <SideBar>
              <Grip $side />
              <Tool $on aria-label="Редактирование детали">
                <Icon n="cubeSolid" />
              </Tool>
              <SideGroup $h={91}>
                {railTop.map((n) => (
                  <RailTool key={n} aria-label={n}>
                    <Icon n={n} s={10} />
                  </RailTool>
                ))}
              </SideGroup>
              <Divider $side />
              <SideGroup $h={190}>
                {railMain.map((n, i) => (
                  <RailTool key={i} aria-label={n}>
                    <Icon n={n} />
                  </RailTool>
                ))}
              </SideGroup>
              <Divider $side />
              <SideGroup $h={16}>
                <RailTool aria-label="Отчет">
                  <Icon n="report" />
                </RailTool>
              </SideGroup>
              <SideCap aria-label="Параметры панели">
                <Icon n="overflowSide" s={5} />
              </SideCap>
            </SideBar>
          </SideRail>
          <Main>
            <TabRow>
              <Prev aria-label="Назад">
                <Icon n="prev" s={6} />
              </Prev>
              <DocTab>МЧ00.64.00.04. Зубчатое колесо</DocTab>
            </TabRow>
            <Split>
              <Panel>
                <PanelHead>
                  <PanelTitle>Дерево модели</PanelTitle>
                  <button aria-label="Закрепить">
                    <Svg viewBox="0 0 8 8" $s={7}>
                      <path d="M2 1h4v4H2zM1 5h6M4 5v3" fill="none" stroke="#fff" strokeWidth="1.3" />
                    </Svg>
                  </button>
                  <button aria-label="Закрыть панель">
                    <Svg viewBox="0 0 8 8" $s={6}>
                      <path d="m1 1 6 6M7 1 1 7" stroke="#fff" strokeWidth="1.8" />
                    </Svg>
                  </button>
                </PanelHead>
                <PanelTools>
                  <Tools items={"tree list caret | bluePage grayPages".split(" ")} />
                </PanelTools>
                <TreeBox>
                  <TreeList>
                    <Node $root>
                      <Icon n="part" />
                      МЧ00.64.00.04. Зубчатое колесо
                    </Node>
                    {nodes.map(([icon, label]) => (
                      <Node key={label}>
                        <NodeRow>
                          <Branch>
                            <Expander aria-label="Развернуть">
                              <Svg viewBox="0 0 5 5" $s={5}>
                                <path d="M2.5 1v3M1 2.5h3" stroke="#222" />
                              </Svg>
                            </Expander>
                          </Branch>
                          <Icon n={icon} />
                        </NodeRow>
                        {label}
                      </Node>
                    ))}
                  </TreeList>
                </TreeBox>
              </Panel>
              <Model />
            </Split>
          </Main>
        </Work>
        <Dialog role="dialog" aria-label="Новый документ">
          <DialogHead>
            <DialogTitle>Новый документ</DialogTitle>
            <Close aria-label="Закрыть">
              <Svg viewBox="0 0 8 8" $s={8}>
                <path d="m1 1 6 6M7 1 1 7" stroke="#fff" strokeWidth="1.5" />
              </Svg>
            </Close>
          </DialogHead>
          <DialogBody>
            <Tabs role="tablist">
              <Tab role="tab" aria-selected $on>
                Новые документы
              </Tab>
              <Tab role="tab">Шаблоны</Tab>
            </Tabs>
            <Pane>
              <ViewTools>
                {["viewLarge", "viewSmall", "viewTable"].map((n) => (
                  <ViewButton key={n} aria-label={n}>
                    <Icon n={n} s={9} />
                  </ViewButton>
                ))}
              </ViewTools>
              <Docs>
                {docNames.map((name, i) => (
                  <Doc key={name}>
                    <Svg viewBox="0 0 23 23" $s={23} aria-hidden="true">
                      {docIcons[i]}
                    </Svg>
                    <DocLabel $on={i === 0}>{name}</DocLabel>
                  </Doc>
                ))}
              </Docs>
            </Pane>
            <Actions>
              <Action $primary>OK</Action>
              <Action>Отмена</Action>
              <Action>
                <u>С</u>правка
              </Action>
            </Actions>
          </DialogBody>
          <SizeGrip />
        </Dialog>
      </Window>
    </>
  );
}
